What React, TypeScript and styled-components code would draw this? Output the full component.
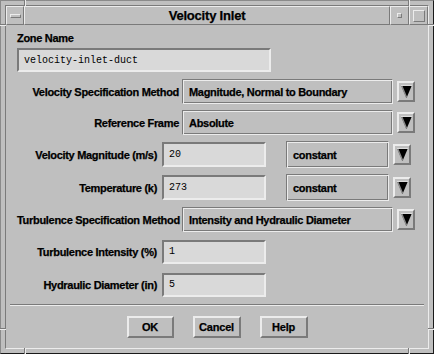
import styled, { createGlobalStyle, css } from 'styled-components'

const GlobalStyle = createGlobalStyle`
  html, body {
    margin: 0;
    padding: 0;
    background: #bfbfbf;
  }
  * {
    box-sizing: border-box;
  }
`

const LIGHT = '#ececec'
const DARK = '#7a7a7a'

// heavy bold face like the old X bitmap helvetica
const boldText = css`
  font-family: 'Liberation Sans', Helvetica, Arial, sans-serif;
  font-weight: bold;
  font-size: 11px;
  letter-spacing: -0.3px;
  -webkit-text-stroke: 0.25px #000;
  color: #000;
  white-space: nowrap;
`

const ArrowIcon = () => (
  <svg width="11" height="13" viewBox="0 0 11 13">
    <polygon points="0,0 11,0 5.5,13" fill="#000" />
    <line x1="0.6" y1="0.5" x2="5.6" y2="12.4" stroke="#8c8c8c" strokeWidth="1.4" />
    <line x1="0" y1="0.5" x2="11" y2="0.5" stroke="#dcdcdc" strokeWidth="1" />
  </svg>
)

const OptionMenu = ({ value, width, height }: { value: string; width: number; height: number }) => (
  <>
    <MenuBox $width={width} $height={height}>{value}</MenuBox>
    <ArrowButton>
      <ArrowIcon />
    </ArrowButton>
  </>
)

const App = () => {
  return (
    <>
      <GlobalStyle />
      <Frame>
        <Notch $side="top" $at={24} />
        <Notch $side="top" $at={408} />
        <Notch $side="bottom" $at={24} />
        <Notch $side="bottom" $at={408} />
        <Notch $side="left" $at={24} />
        <Notch $side="left" $at={328} />
        <Notch $side="right" $at={24} />
        <Notch $side="right" $at={328} />
        <Inner>
          <TitleBar>
            <TitleButton $width={18}>
              <MenuBar />
            </TitleButton>
            <Title>Velocity Inlet</Title>
            <TitleButton $width={19}>
              <WinSquare $size={5} />
            </TitleButton>
            <TitleButton $width={19}>
              <WinSquare $size={12} />
            </TitleButton>
          </TitleBar>
          <Client>
            <Form>
              <ZoneLabel>Zone Name</ZoneLabel>
              <TextField $width={254} $height={24}>velocity-inlet-duct</TextField>

              <Row $top={7} $height={25}>
                <Label $width={162}>Velocity Specification Method</Label>
                <OptionMenu value="Magnitude, Normal to Boundary" width={211} height={25} />
              </Row>
              <Row $top={6} $height={25}>
                <Label $width={162}>Reference Frame</Label>
                <OptionMenu value="Absolute" width={211} height={25} />
              </Row>
              <Row $top={6} $height={27}>
                <Label $width={140}>Velocity Magnitude (m/s)</Label>
                <TextField $width={104} $height={25}>20</TextField>
                <Spacer />
                <OptionMenu value="constant" width={103} height={27} />
              </Row>
              <Row $top={6} $height={27}>
                <Label $width={140}>Temperature (k)</Label>
                <TextField $width={104} $height={25}>273</TextField>
                <Spacer />
                <OptionMenu value="constant" width={103} height={27} />
              </Row>
              <Row $top={6} $height={25}>
                <Label $width={162}>Turbulence Specification Method</Label>
                <OptionMenu value="Intensity and Hydraulic Diameter" width={211} height={25} />
              </Row>
              <Row $top={7} $height={25}>
                <Label $width={140}>Turbulence Intensity (%)</Label>
                <TextField $width={104} $height={24}>1</TextField>
              </Row>
              <Row $top={8} $height={25}>
                <Label $width={140}>Hydraulic Diameter (in)</Label>
                <TextField $width={104} $height={24}>5</TextField>
              </Row>
            </Form>
            <Separator />
            <ButtonRow>
              <PushButton $width={47}>OK</PushButton>
              <PushButton $width={48}>Cancel</PushButton>
              <PushButton $width={48}>Help</PushButton>
            </ButtonRow>
          </Client>
        </Inner>
      </Frame>
    </>
  )
}

const Frame = styled.div`
  position: relative;
  width: 434px;
  height: 354px;
  background: #bfbfbf;
  border: 1px solid;
  border-color: #8a8a8a #1a1a1a #1a1a1a #8a8a8a;
  padding: 4px;
`

const Notch = styled.div<{ $side: 'top' | 'bottom' | 'left' | 'right'; $at: number }>`
  position: absolute;
  ${({ $side, $at }) =>
    $side === 'top' || $side === 'bottom'
      ? `
    left: ${$at - 1}px;
    ${$side}: -1px;
    width: 2px;
    height: 6px;
    border-left: 1px solid ${DARK};
    border-right: 1px solid ${LIGHT};
  `
      : `
    top: ${$at - 1}px;
    ${$side}: -1px;
    height: 2px;
    width: 6px;
    border-top: 1px solid ${DARK};
    border-bottom: 1px solid ${LIGHT};
  `}
`

const Inner = styled.div`
  height: 100%;
  display: flex;
  flex-direction: column;
  border: 1px solid;
  border-color: ${DARK} ${LIGHT} ${LIGHT} ${DARK};
`

const TitleBar = styled.div`
  display: flex;
  height: 19px;
  flex-shrink: 0;
`

const TitleButton = styled.div<{ $width: number }>`
  width: ${({ $width }) => $width}px;
  display: flex;
  align-items: center;
  justify-content: center;
  border: 1px solid;
  border-color: ${LIGHT} ${DARK} ${DARK} ${LIGHT};
`

const Title = styled.div`
  ${boldText}
  flex: 1;
  display: flex;
  align-items: center;
  justify-content: center;
  border: 1px solid;
  border-color: ${LIGHT} ${DARK} ${DARK} ${LIGHT};
  font-size: 13px;
  letter-spacing: -0.2px;
`

const MenuBar = styled.div`
  width: 11px;
  height: 4px;
  border: 1px solid;
  border-color: ${LIGHT} ${DARK} ${DARK} ${LIGHT};
`

const WinSquare = styled.div<{ $size: number }>`
  width: ${({ $size }) => $size}px;
  height: ${({ $size }) => $size}px;
  border: 1px solid;
  border-color: ${LIGHT} ${DARK} ${DARK} ${LIGHT};
`

const Client = styled.div`
  flex: 1;
  display: flex;
  flex-direction: column;
`

const Form = styled.div`
  display: flex;
  flex-direction: column;
  padding: 6px 0 0 11px;
`

const ZoneLabel = styled.div`
  ${boldText}
  height: 14px;
  line-height: 14px;
  margin-bottom: 3px;
`

const Row = styled.div<{ $top: number; $height: number }>`
  display: flex;
  align-items: center;
  margin-top: ${({ $top }) => $top}px;
  height: ${({ $height }) => $height}px;
`

const Label = styled.div<{ $width: number }>`
  ${boldText}
  width: ${({ $width }) => $width}px;
  flex-shrink: 0;
  text-align: right;
  margin-right: ${({ $width }) => ($width > 150 ? 3 : 5)}px;
`

const TextField = styled.div<{ $width: number; $height: number }>`
  width: ${({ $width }) => $width}px;
  height: ${({ $height }) => $height}px;
  flex-shrink: 0;
  display: flex;
  align-items: center;
  padding-left: 5px;
  background: #d9d9d9;
  border: 2px solid;
  border-color: ${DARK} ${LIGHT} ${LIGHT} ${DARK};
  font-family: 'Liberation Mono', 'Courier New', monospace;
  font-size: 10px;
  color: #000;
`

const Spacer = styled.div`
  width: 20px;
  flex-shrink: 0;
`

const MenuBox = styled.div<{ $width: number; $height: number }>`
  ${boldText}
  width: ${({ $width }) => $width}px;
  height: ${({ $height }) => $height}px;
  flex-shrink: 0;
  display: flex;
  align-items: center;
  padding-left: 6px;
  border: 1px solid;
  border-color: ${DARK} ${LIGHT} ${LIGHT} ${DARK};
  box-shadow: inset 1px 1px ${LIGHT}, inset -1px -1px ${DARK};
`

const ArrowButton = styled.div`
  width: 18px;
  height: 21px;
  margin-left: 4px;
  flex-shrink: 0;
  display: flex;
  align-items: center;
  justify-content: center;
  border: 2px solid;
  border-color: ${LIGHT} ${DARK} ${DARK} ${LIGHT};
`

const Separator = styled.div`
  margin: 7px 4px 0 4px;
  height: 2px;
  border-top: 1px solid ${DARK};
  border-bottom: 1px solid ${LIGHT};
`

const ButtonRow = styled.div`
  display: flex;
  justify-content: center;
  gap: 19px;
  margin-top: 10px;
`

const PushButton = styled.div<{ $width: number }>`
  ${boldText}
  width: ${({ $width }) => $width}px;
  height: 22px;
  display: flex;
  align-items: center;
  justify-content: center;
  border: 2px solid;
  border-color: ${LIGHT} ${DARK} ${DARK} ${LIGHT};
  letter-spacing: -0.2px;
`

export default App
